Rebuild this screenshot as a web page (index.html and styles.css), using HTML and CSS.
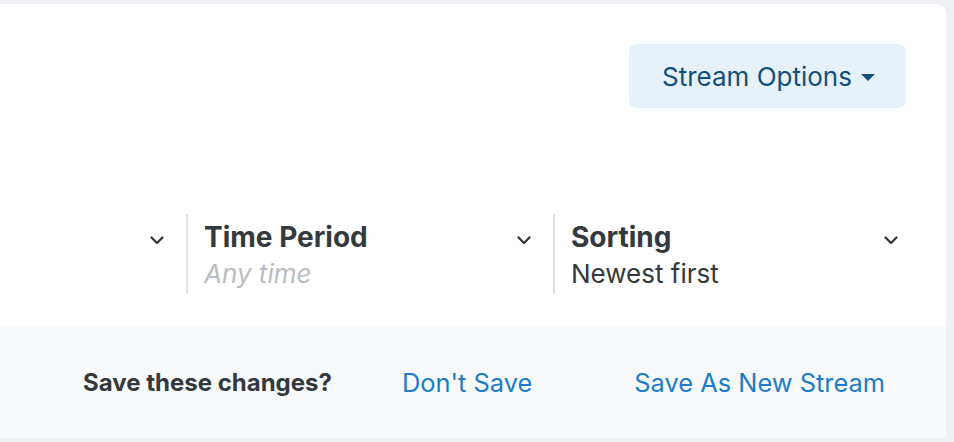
FILE: index.html
```html
<!DOCTYPE html>
<html>
<head>
<meta charset="utf-8">
<link rel="stylesheet" href="styles.css">
</head>
<body>
<div class="card">
  <div class="main">
    <div class="toolbar">
      <button class="options-btn">Stream Options<span class="caret"></span></button>
    </div>
    <div class="filters">
      <div class="filter stub">
        <svg class="chev" width="14" height="9" viewBox="0 0 14 9"><path d="M1.5 1.5 L7 7 L12.5 1.5" fill="none" stroke="#2f3539" stroke-width="2.2" stroke-linecap="round" stroke-linejoin="round"/></svg>
      </div>
      <div class="filter">
        <div class="texts">
          <div class="f-title">Time Period</div>
          <div class="f-value placeholder">Any time</div>
        </div>
        <svg class="chev" width="14" height="9" viewBox="0 0 14 9"><path d="M1.5 1.5 L7 7 L12.5 1.5" fill="none" stroke="#2f3539" stroke-width="2.2" stroke-linecap="round" stroke-linejoin="round"/></svg>
      </div>
      <div class="filter">
        <div class="texts">
          <div class="f-title">Sorting</div>
          <div class="f-value">Newest first</div>
        </div>
        <svg class="chev" width="14" height="9" viewBox="0 0 14 9"><path d="M1.5 1.5 L7 7 L12.5 1.5" fill="none" stroke="#2f3539" stroke-width="2.2" stroke-linecap="round" stroke-linejoin="round"/></svg>
      </div>
    </div>
  </div>
  <div class="footer">
    <span class="question">Save these changes?</span>
    <a class="link dont">Don't Save</a>
    <a class="link save-new">Save As New Stream</a>
  </div>
</div>
</body>
</html>
```
FILE: styles.css
```css
html, body {
  margin: 0;
  padding: 0;
}
body {
  background: #eef0f3;
  font-family: Inter, "Noto Sans", sans-serif;
  color: #33393d;
  width: 954px;
  height: 442px;
  overflow: hidden;
}
.card {
  margin-top: 4px;
  width: 946px;
  height: 434px;
  background: #ffffff;
  border-radius: 0 9px 4px 0;
  overflow: hidden;
  display: flex;
  flex-direction: column;
}
.main {
  height: 322px;
  display: flex;
  flex-direction: column;
}
.toolbar {
  display: flex;
  justify-content: flex-end;
  padding: 40px 40px 0 0;
}
.options-btn {
  height: 64px;
  width: 277px;
  border: none;
  border-radius: 8px;
  background: #e6f1fa;
  color: #134f7c;
  font-family: Inter, "Noto Sans", sans-serif;
  font-size: 26px;
  display: flex;
  align-items: center;
  padding: 0 0 0 33px;
  gap: 9px;
}
.caret {
  width: 0;
  height: 0;
  border-left: 7px solid transparent;
  border-right: 7px solid transparent;
  border-top: 7px solid #134f7c;
  margin-top: 2px;
}
.filters {
  display: flex;
  margin-top: 106px;
}
.filter {
  width: 367px;
  height: 80px;
  box-sizing: border-box;
  border-left: 2px solid #dfe1e3;
  display: flex;
  justify-content: space-between;
  padding: 4px 22px 0 16px;
}
.filter.stub {
  width: 186px;
  border-left: none;
  justify-content: flex-end;
  padding-right: 22px;
}
.chev {
  margin-top: 18px;
}
.f-title {
  font-size: 28px;
  font-weight: 700;
  line-height: 38px;
  color: #33393d;
}
.f-value {
  font-size: 26px;
  line-height: 36px;
  color: #33393d;
}
.f-value.placeholder {
  font-style: italic;
  color: #b9bdc1;
}
.footer {
  flex: 1;
  background: #f8f9fb;
  display: flex;
  align-items: center;
  padding-left: 83px;
}
.question {
  font-size: 24px;
  font-weight: 700;
  color: #33393d;
}
.link {
  font-size: 25.4px;
  color: #1b7dc6;
}
.dont {
  margin-left: 70px;
}
.save-new {
  margin-left: 102px;
}
```
